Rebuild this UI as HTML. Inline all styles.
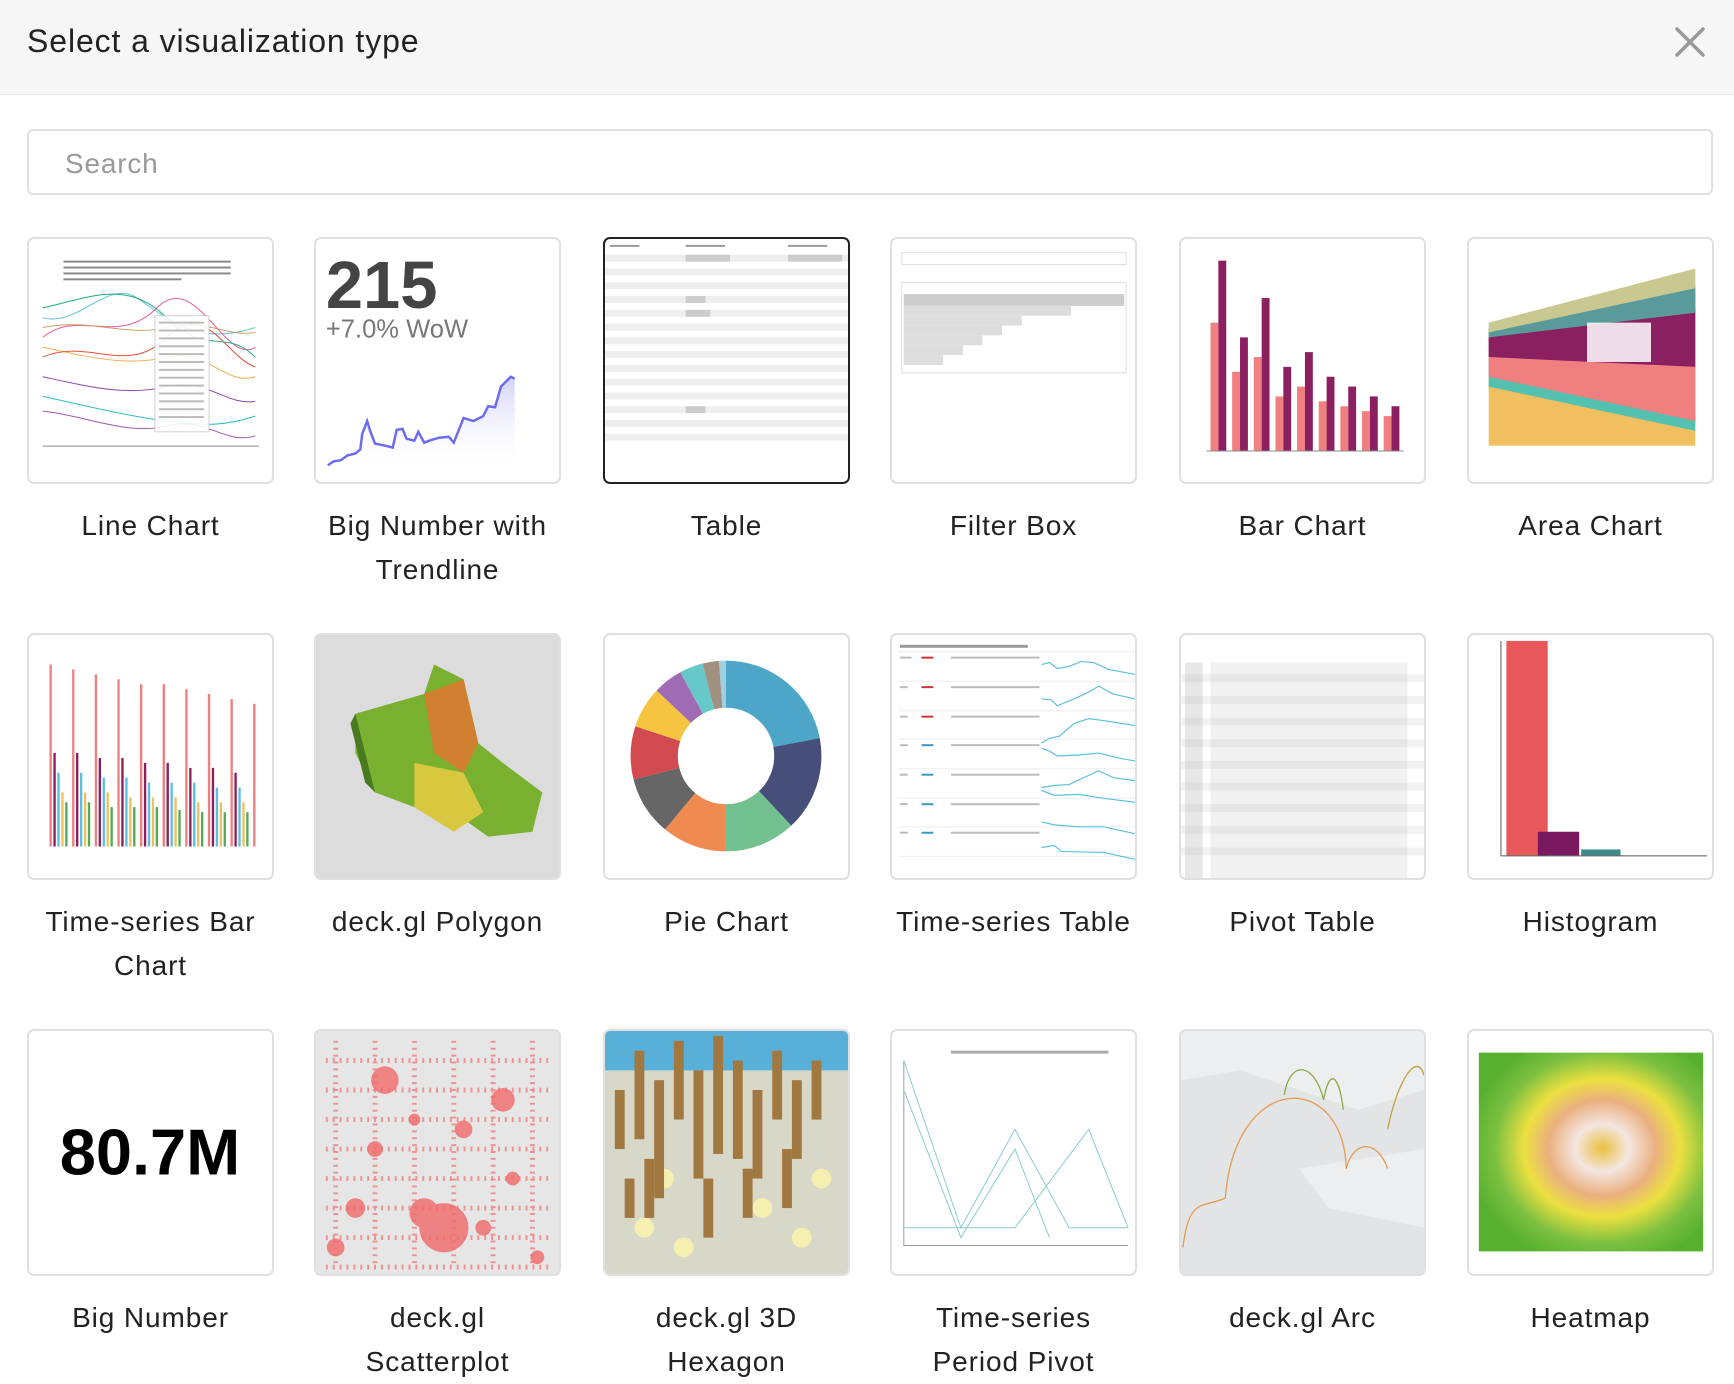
<!DOCTYPE html>
<html><head><meta charset="utf-8">
<style>
*{box-sizing:border-box;margin:0;padding:0}
body{width:1734px;height:1366px;overflow:hidden;background:#fff;font-family:"Liberation Sans",sans-serif;color:#222;position:relative}
.hdr{position:absolute;left:0;top:0;width:1734px;height:95px;background:#f6f6f6;border-bottom:1px solid #e6e6e6}
.hdr h1{position:absolute;left:27px;top:23px;font-weight:normal;font-size:32px;color:#222;letter-spacing:0.9px}
.x{position:absolute;left:1672px;top:24px}
.search{position:absolute;left:27px;top:129px;width:1686px;height:66px;border:2px solid #e0e0e0;border-radius:6px;font-size:28px;color:#999;padding:17px 0 0 36px;letter-spacing:0.8px}
.card{position:absolute;width:247px;height:247px;border:2px solid #e0e0e0;border-radius:7px;overflow:hidden;background:#fff}
.card.sel{border:2px solid #222}
.card svg{display:block;width:100%;height:100%}
.lbl{position:absolute;width:247px;text-align:center;font-size:28px;line-height:44px;color:#222;letter-spacing:0.9px}
</style></head><body>
<div class="hdr"><h1>Select a visualization type</h1>
<svg class="x" width="36" height="36" viewBox="0 0 36 36"><path d="M5 5L31 31M31 5L5 31" stroke="#999" stroke-width="3.5" stroke-linecap="round"/></svg></div>
<div class="search">Search</div>

<!-- Row 1 -->
<div class="card" style="left:27px;top:237px"><svg viewBox="0 0 247 247">
<g stroke-width="1" fill="none">
<path d="M14 80C50 90 80 40 110 60S170 110 230 90" stroke="#5bc0de"/>
<path d="M14 100C50 70 90 110 130 70S200 130 230 110" stroke="#e85d9b"/>
<path d="M14 110C60 120 100 130 140 120S200 150 230 140" stroke="#f0ad4e"/>
<path d="M14 140C60 150 100 160 140 150S200 170 230 165" stroke="#8e44ad"/>
<path d="M14 160C60 170 100 180 140 185S200 190 230 180" stroke="#3bb"/>
<path d="M14 120C60 100 100 140 140 100S200 120 230 130" stroke="#e74c3c"/>
<path d="M14 90C60 80 100 100 140 90S200 100 230 95" stroke="#c8a060"/>
<path d="M14 175C60 180 100 200 140 190S200 210 230 200" stroke="#9b59b6"/>
<path d="M14 70C60 60 100 40 140 80S200 90 230 120" stroke="#2a7" />
</g>
<rect x="128" y="78" width="55" height="118" fill="#fff" stroke="#ccc" opacity=".9"/>
<g fill="#bbb"><rect x="132" y="84" width="46" height="2"/><rect x="132" y="92" width="46" height="2"/><rect x="132" y="100" width="46" height="2"/><rect x="132" y="108" width="46" height="2"/><rect x="132" y="116" width="46" height="2"/><rect x="132" y="124" width="46" height="2"/><rect x="132" y="132" width="46" height="2"/><rect x="132" y="140" width="46" height="2"/><rect x="132" y="148" width="46" height="2"/><rect x="132" y="156" width="46" height="2"/><rect x="132" y="164" width="46" height="2"/><rect x="132" y="172" width="46" height="2"/><rect x="132" y="180" width="46" height="2"/></g>
<g fill="#888"><rect x="35" y="22" width="170" height="2"/><rect x="35" y="28" width="170" height="2"/><rect x="35" y="34" width="170" height="2"/><rect x="35" y="40" width="120" height="2"/></g>
<rect x="14" y="210" width="220" height="1" fill="#888"/>
</svg></div>
<div class="card" style="left:314px;top:237px"><svg viewBox="0 0 247 247">
<text x="10" y="70" font-family="Liberation Sans" font-weight="bold" font-size="68" fill="#444">215</text>
<text x="10" y="100" font-family="Liberation Sans" font-size="26" fill="#777">+7.0% WoW</text>
<defs><linearGradient id="g1" x1="0" y1="0" x2="0" y2="1"><stop offset="0" stop-color="#8b8bf0" stop-opacity=".4"/><stop offset="1" stop-color="#fff" stop-opacity="0"/></linearGradient></defs>
<path d="M12 230L18 226L25 225L32 220L40 218L45 214L47 198L52 185L55 195L60 208L70 210L78 212L82 194L88 193L92 203L100 205L104 196L110 207L115 205L125 202L135 201L140 207L150 182L160 185L170 180L175 170L182 171L188 150L193 145L198 140L202 142L202 235L12 235Z" fill="url(#g1)"/>
<path d="M12 230L18 226L25 225L32 220L40 218L45 214L47 198L52 185L55 195L60 208L70 210L78 212L82 194L88 193L92 203L100 205L104 196L110 207L115 205L125 202L135 201L140 207L150 182L160 185L170 180L175 170L182 171L188 150L193 145L198 140L202 142" fill="none" stroke="#6b6bef" stroke-width="2.5"/>
</svg></div>
<div class="card sel" style="left:603px;top:237px"><svg viewBox="0 0 247 247">
<g fill="#eee">
<rect x="0" y="16" width="247" height="7"/><rect x="0" y="30" width="247" height="7"/><rect x="0" y="44" width="247" height="7"/><rect x="0" y="58" width="247" height="7"/><rect x="0" y="72" width="247" height="7"/><rect x="0" y="86" width="247" height="7"/><rect x="0" y="100" width="247" height="7"/><rect x="0" y="114" width="247" height="7"/><rect x="0" y="128" width="247" height="7"/><rect x="0" y="142" width="247" height="7"/><rect x="0" y="156" width="247" height="7"/><rect x="0" y="170" width="247" height="7"/><rect x="0" y="184" width="247" height="7"/><rect x="0" y="198" width="247" height="7"/></g>
<g fill="#ccc"><rect x="82" y="16" width="45" height="7"/><rect x="186" y="16" width="55" height="7"/><rect x="82" y="58" width="20" height="7"/><rect x="82" y="72" width="25" height="7"/><rect x="82" y="170" width="20" height="7"/></g>
<g fill="#999"><rect x="5" y="6" width="30" height="2"/><rect x="82" y="6" width="40" height="2"/><rect x="186" y="6" width="40" height="2"/></g>
</svg></div>
<div class="card" style="left:890px;top:237px"><svg viewBox="0 0 247 247">
<rect x="10" y="14" width="228" height="12" fill="#fff" stroke="#ddd"/>
<rect x="10" y="44" width="228" height="92" fill="#fff" stroke="#ddd"/>
<rect x="12" y="56" width="224" height="12" fill="#ccc"/>
<rect x="12" y="68" width="170" height="10" fill="#ddd"/>
<rect x="12" y="78" width="120" height="10" fill="#ddd"/>
<rect x="12" y="88" width="100" height="10" fill="#ddd"/>
<rect x="12" y="98" width="80" height="10" fill="#ddd"/>
<rect x="12" y="108" width="60" height="10" fill="#ddd"/>
<rect x="12" y="118" width="40" height="10" fill="#ddd"/>
</svg></div>
<div class="card" style="left:1179px;top:237px"><svg viewBox="0 0 247 247">
<g fill="#f08080"><rect x="30" y="85" width="8" height="130"/><rect x="52" y="135" width="8" height="80"/><rect x="74" y="120" width="8" height="95"/><rect x="96" y="160" width="8" height="55"/><rect x="118" y="150" width="8" height="65"/><rect x="140" y="165" width="8" height="50"/><rect x="162" y="170" width="8" height="45"/><rect x="184" y="175" width="8" height="40"/><rect x="206" y="180" width="8" height="35"/></g>
<g fill="#8b2060"><rect x="38" y="22" width="8" height="193"/><rect x="60" y="100" width="8" height="115"/><rect x="82" y="60" width="8" height="155"/><rect x="104" y="130" width="8" height="85"/><rect x="126" y="115" width="8" height="100"/><rect x="148" y="140" width="8" height="75"/><rect x="170" y="150" width="8" height="65"/><rect x="192" y="160" width="8" height="55"/><rect x="214" y="170" width="8" height="45"/></g>
<rect x="26" y="215" width="200" height="1" fill="#888"/>
</svg></div>
<div class="card" style="left:1467px;top:237px"><svg viewBox="0 0 247 247">
<path d="M20 90L230 40L230 210L20 210Z" fill="#f0c060"/>
<path d="M20 95L230 48L230 195L20 150Z" fill="#54c0b0"/>
<path d="M20 100L230 55L230 185L20 140Z" fill="#f08080"/>
<path d="M20 100L230 70L230 130L20 120Z" fill="#8b2060"/>
<path d="M20 90L230 48L230 75L20 100Z" fill="#5a9a9a"/>
<path d="M20 85L230 30L230 50L20 95Z" fill="#c8c890"/>
<rect x="120" y="85" width="65" height="40" fill="#fff" opacity=".85"/>
</svg></div>
<div class="lbl" style="left:27px;top:504px">Line Chart</div>
<div class="lbl" style="left:314px;top:504px">Big Number with Trendline</div>
<div class="lbl" style="left:603px;top:504px">Table</div>
<div class="lbl" style="left:890px;top:504px">Filter Box</div>
<div class="lbl" style="left:1179px;top:504px">Bar Chart</div>
<div class="lbl" style="left:1467px;top:504px">Area Chart</div>

<!-- Row 2 -->
<div class="card" style="left:27px;top:633px"><svg viewBox="0 0 247 247">
<g stroke-width="2.4">
<path d="M22 215V30M45 215V35M68 215V40M91 215V45M114 215V50M137 215V50M160 215V55M183 215V60M206 215V65M229 215V70" stroke="#f08080"/>
<path d="M26 215V120M49 215V120M72 215V125M95 215V125M118 215V130M141 215V130M164 215V135M187 215V135M210 215V140" stroke="#8b2060"/>
<path d="M30 215V140M53 215V140M76 215V145M99 215V145M122 215V150M145 215V150M168 215V150M191 215V155M214 215V155" stroke="#5bc0de"/>
<path d="M34 215V160M57 215V160M80 215V160M103 215V165M126 215V165M149 215V165M172 215V170M195 215V170M218 215V170" stroke="#f0c060"/>
<path d="M38 215V170M61 215V170M84 215V175M107 215V175M130 215V175M153 215V178M176 215V180M199 215V180M222 215V180" stroke="#5a5"/>
</g>
</svg></div>
<div class="card" style="left:314px;top:633px;background:#d8d8d8"><svg viewBox="0 0 247 247">
<rect width="247" height="247" fill="#dcdcdc"/>
<path d="M40 80L110 60L120 30L150 45L165 110L190 130L230 160L220 200L175 205L140 180L100 175L60 160L40 120Z" fill="#7ab030"/>
<path d="M110 60L150 45L165 110L150 140L120 120Z" fill="#d08030"/>
<path d="M100 130L150 140L170 180L140 200L100 175Z" fill="#d8c840"/>
<path d="M40 80L60 160L50 150L35 90Z" fill="#4a7a20"/>
</svg></div>
<div class="card" style="left:603px;top:633px"><svg viewBox="0 0 247 247">
<g transform="rotate(-90 123 123)" fill="none" stroke-width="48">
<circle cx="123" cy="123" r="73" stroke="#4da6c8" stroke-dasharray="100.9 458.7" stroke-dashoffset="0"/>
<circle cx="123" cy="123" r="73" stroke="#454f7a" stroke-dasharray="73.4 458.7" stroke-dashoffset="-100.9"/>
<circle cx="123" cy="123" r="73" stroke="#72c08f" stroke-dasharray="55 458.7" stroke-dashoffset="-174.3"/>
<circle cx="123" cy="123" r="73" stroke="#ef8a50" stroke-dasharray="50.5 458.7" stroke-dashoffset="-229.3"/>
<circle cx="123" cy="123" r="73" stroke="#666" stroke-dasharray="45.9 458.7" stroke-dashoffset="-279.8"/>
<circle cx="123" cy="123" r="73" stroke="#d04a50" stroke-dasharray="41.3 458.7" stroke-dashoffset="-325.7"/>
<circle cx="123" cy="123" r="73" stroke="#f5c542" stroke-dasharray="32.1 458.7" stroke-dashoffset="-367"/>
<circle cx="123" cy="123" r="73" stroke="#a06bb5" stroke-dasharray="22.9 458.7" stroke-dashoffset="-399.1"/>
<circle cx="123" cy="123" r="73" stroke="#66c8c8" stroke-dasharray="18.3 458.7" stroke-dashoffset="-422"/>
<circle cx="123" cy="123" r="73" stroke="#a09080" stroke-dasharray="12.8 458.7" stroke-dashoffset="-440.3"/>
<circle cx="123" cy="123" r="73" stroke="#9fd0e0" stroke-dasharray="5.6 458.7" stroke-dashoffset="-453.1"/>
</g>
</svg></div>
<div class="card" style="left:890px;top:633px"><svg viewBox="0 0 247 247">
<g fill="#999"><rect x="8" y="10" width="130" height="3"/></g>
<g stroke="#eee"><path d="M6 17H247M6 47H247M6 77H247M6 106H247M6 136H247M6 166H247M6 195H247M6 225H247"/></g>
<g fill="#c33"><rect x="30" y="22" width="12" height="2"/><rect x="30" y="52" width="12" height="2"/><rect x="30" y="82" width="12" height="2"/></g>
<g fill="#39c"><rect x="30" y="111" width="12" height="2"/><rect x="30" y="141" width="12" height="2"/><rect x="30" y="171" width="12" height="2"/><rect x="30" y="200" width="12" height="2"/></g>
<g fill="#bbb"><rect x="8" y="22" width="12" height="2"/><rect x="60" y="22" width="90" height="2"/><rect x="8" y="52" width="8" height="2"/><rect x="60" y="52" width="90" height="2"/><rect x="8" y="82" width="8" height="2"/><rect x="60" y="82" width="90" height="2"/><rect x="8" y="111" width="8" height="2"/><rect x="60" y="111" width="90" height="2"/><rect x="8" y="141" width="8" height="2"/><rect x="60" y="141" width="90" height="2"/><rect x="8" y="171" width="8" height="2"/><rect x="60" y="171" width="90" height="2"/><rect x="8" y="200" width="8" height="2"/><rect x="60" y="200" width="90" height="2"/></g>
<g fill="none" stroke="#5bc0de" stroke-width="1.2">
<path d="M152 30L160 28L168 34L180 32L192 27L205 28L220 35L247 40"/>
<path d="M152 65L162 66L168 72L185 65L200 58L210 52L225 60L247 65"/>
<path d="M152 110L160 105L170 103L185 90L200 85L215 87L247 92"/>
<path d="M152 115L160 118L168 123L190 122L210 120L230 125L247 128"/>
<path d="M152 155L165 153L180 152L195 145L210 138L225 145L247 148"/>
<path d="M152 158L165 163L190 162L215 166L247 170"/>
<path d="M152 190L165 193L190 195L215 195L247 202"/>
<path d="M152 216L165 214L172 220L215 221L247 228"/>
</g>
</svg></div>
<div class="card" style="left:1179px;top:633px"><svg viewBox="0 0 247 247">
<g fill="#f2f2f2"><rect y="40" width="247" height="8"/><rect y="62" width="247" height="8"/><rect y="84" width="247" height="8"/><rect y="106" width="247" height="8"/><rect y="128" width="247" height="8"/><rect y="150" width="247" height="8"/><rect y="172" width="247" height="8"/><rect y="194" width="247" height="8"/><rect y="216" width="247" height="8"/></g>
<g fill="#bbb">
<rect x="4" y="28" width="18" height="220" opacity=".35"/>
<rect x="30" y="28" width="200" height="220" opacity=".2"/>
</g>
</svg></div>
<div class="card" style="left:1467px;top:633px"><svg viewBox="0 0 247 247">
<rect x="38" y="6" width="42" height="218" fill="#e8585a"/>
<rect x="70" y="200" width="42" height="24" fill="#7a1860"/>
<rect x="114" y="218" width="40" height="6" fill="#3a8a8a"/>
<rect x="32" y="224" width="210" height="1" fill="#555"/>
<rect x="32" y="6" width="1" height="218" fill="#555"/>
</svg></div>
<div class="lbl" style="left:27px;top:900px">Time-series Bar Chart</div>
<div class="lbl" style="left:314px;top:900px">deck.gl Polygon</div>
<div class="lbl" style="left:603px;top:900px">Pie Chart</div>
<div class="lbl" style="left:890px;top:900px">Time-series Table</div>
<div class="lbl" style="left:1179px;top:900px">Pivot Table</div>
<div class="lbl" style="left:1467px;top:900px">Histogram</div>

<!-- Row 3 -->
<div class="card" style="left:27px;top:1029px"><svg viewBox="0 0 247 247">
<text x="123" y="146" text-anchor="middle" font-family="Liberation Sans" font-weight="bold" font-size="66" fill="#000">80.7M</text>
</svg></div>
<div class="card" style="left:314px;top:1029px"><svg viewBox="0 0 247 247">
<rect width="247" height="247" fill="#e6e6e6"/>
<g fill="#f07070" opacity=".85">
<circle cx="70" cy="50" r="14"/><circle cx="190" cy="70" r="12"/><circle cx="130" cy="200" r="25"/><circle cx="110" cy="185" r="15"/><circle cx="60" cy="120" r="8"/><circle cx="40" cy="180" r="10"/><circle cx="200" cy="150" r="7"/><circle cx="150" cy="100" r="9"/><circle cx="100" cy="90" r="6"/><circle cx="170" cy="200" r="8"/><circle cx="20" cy="220" r="9"/><circle cx="225" cy="230" r="7"/>
</g>
<g fill="none" stroke="#f07070" stroke-width="5" stroke-dasharray="2 5" opacity=".7">
<path d="M10 30H240M10 60H240M10 90H240M10 120H240M10 150H240M10 180H240M10 210H240M10 240H240"/>
<path d="M20 10V240M60 10V240M100 10V240M140 10V240M180 10V240M220 10V240"/>
</g>
</svg></div>
<div class="card" style="left:603px;top:1029px"><svg viewBox="0 0 247 247">
<rect width="247" height="247" fill="#d8d8c8"/>
<rect width="247" height="40" fill="#58b0d8"/>
<g fill="#f5f0b0"><circle cx="40" cy="200" r="10"/><circle cx="80" cy="220" r="10"/><circle cx="200" cy="210" r="10"/><circle cx="160" cy="180" r="10"/><circle cx="60" cy="150" r="10"/><circle cx="220" cy="150" r="10"/></g>
<g fill="#a07840">
<rect x="10" y="60" width="10" height="60"/><rect x="30" y="20" width="10" height="90"/><rect x="50" y="50" width="10" height="120"/><rect x="70" y="10" width="10" height="80"/><rect x="90" y="40" width="10" height="110"/><rect x="110" y="5" width="10" height="120"/><rect x="130" y="30" width="10" height="100"/><rect x="150" y="60" width="10" height="90"/><rect x="170" y="20" width="10" height="70"/><rect x="190" y="50" width="10" height="80"/><rect x="210" y="30" width="10" height="60"/><rect x="40" y="130" width="10" height="60"/><rect x="100" y="150" width="10" height="60"/><rect x="140" y="140" width="10" height="50"/><rect x="180" y="120" width="10" height="60"/><rect x="20" y="150" width="10" height="40"/>
</g>
</svg></div>
<div class="card" style="left:890px;top:1029px"><svg viewBox="0 0 247 247">
<g fill="#aaa"><rect x="60" y="20" width="160" height="3"/></g>
<path d="M12 30V218H240" stroke="#999" fill="none"/>
<g fill="none" stroke="#8cc" stroke-width="1">
<path d="M12 30L70 200L125 100L180 200L240 200"/>
<path d="M12 200L70 200L125 200L200 100L240 200"/>
<path d="M12 60L70 210L125 120L160 210"/>
</g>
</svg></div>
<div class="card" style="left:1179px;top:1029px"><svg viewBox="0 0 247 247">
<rect width="247" height="247" fill="#e2e4e6"/>
<path d="M0 0H247V60L180 80L120 60L60 40L0 50Z" fill="#eceeef"/>
<path d="M120 140L247 120V200L150 180Z" fill="#eceeef"/>
<g fill="none" stroke-width="1.3">
<path d="M45 170C55 40 165 40 168 140" stroke="#e89a50"/>
<path d="M2 220C8 170 20 180 45 170" stroke="#e89a50"/>
<path d="M168 140C175 110 200 110 210 140" stroke="#e89a50"/>
<path d="M210 100C220 50 240 20 247 45" stroke="#c0a040"/>
<path d="M105 65C110 30 135 30 145 70C150 40 160 40 165 80" stroke="#88aa44"/>
</g>
</svg></div>
<div class="card" style="left:1467px;top:1029px"><svg viewBox="0 0 247 247">
<defs><radialGradient id="hg" cx="0.55" cy="0.48" r="0.6"><stop offset="0" stop-color="#e8c040"/><stop offset="0.2" stop-color="#f4e6e0"/><stop offset="0.4" stop-color="#eab080"/><stop offset="0.58" stop-color="#ece040"/><stop offset="0.8" stop-color="#7cc040"/><stop offset="1" stop-color="#58b030"/></radialGradient></defs>
<rect x="10" y="22" width="228" height="202" fill="url(#hg)"/>
</svg></div>
<div class="lbl" style="left:27px;top:1296px">Big Number</div>
<div class="lbl" style="left:314px;top:1296px">deck.gl Scatterplot</div>
<div class="lbl" style="left:603px;top:1296px">deck.gl 3D Hexagon</div>
<div class="lbl" style="left:890px;top:1296px">Time-series Period Pivot</div>
<div class="lbl" style="left:1179px;top:1296px">deck.gl Arc</div>
<div class="lbl" style="left:1467px;top:1296px">Heatmap</div>
</body></html>
